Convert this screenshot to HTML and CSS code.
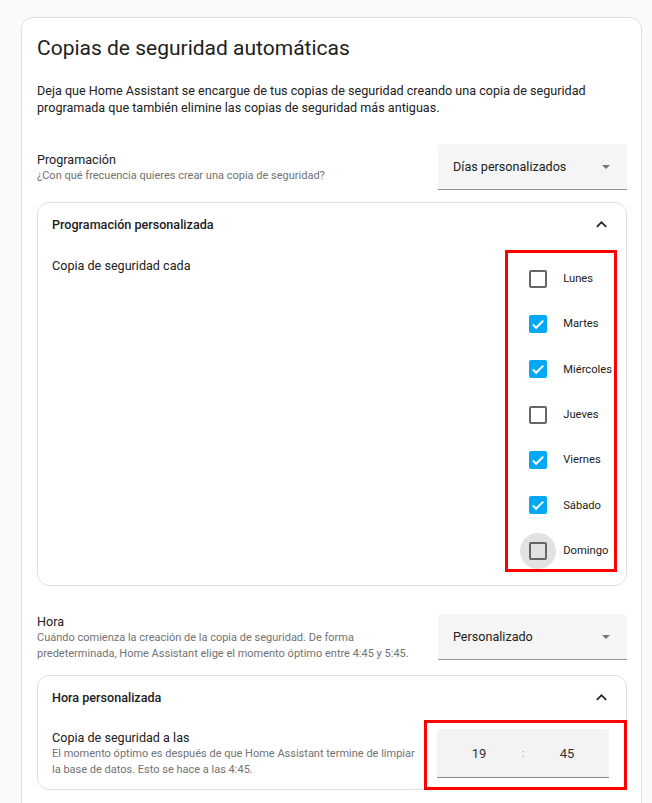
FILE: index.html
```html
<!DOCTYPE html>
<html lang="es">
<head>
    <meta charset="UTF-8">
    <meta name="viewport" content="width=device-width, initial-scale=1.0">
    <title>Copias de seguridad automáticas</title>
    <link rel="stylesheet" href="styles.css">
</head>
<body>

<div class="card">
    <h1 class="card-title">Copias de seguridad automáticas</h1>
    <p class="card-desc">Deja que Home Assistant se encargue de tus copias de seguridad creando una copia de seguridad programada que también elimine las copias de seguridad más antiguas.</p>

    <div class="setting-row">
        <div class="setting-text">
            <div class="setting-label">Programación</div>
            <div class="setting-hint">¿Con qué frecuencia quieres crear una copia de seguridad?</div>
        </div>
        <div class="select">
            <span>Días personalizados</span>
            <svg class="select-arrow" viewBox="0 0 10 5"><path d="M0 0L5 5L10 0Z"/></svg>
        </div>
    </div>

    <div class="panel">
        <div class="panel-header">
            <span>Programación personalizada</span>
            <svg class="chevron" viewBox="0 0 24 24"><path d="M7.41,15.41L12,10.83L16.59,15.41L18,14L12,8L6,14L7.41,15.41Z"/></svg>
        </div>
        <div class="panel-body">
            <div class="setting-label body-label">Copia de seguridad cada</div>
            <div class="days">
                <div class="day">
                    <span class="box-wrap"><span class="box"></span></span>
                    <span class="day-name">Lunes</span>
                </div>
                <div class="day">
                    <span class="box-wrap"><span class="box checked"><svg viewBox="0 0 24 24"><polyline points="5,12.5 9.5,17 19,7.5"/></svg></span></span>
                    <span class="day-name">Martes</span>
                </div>
                <div class="day">
                    <span class="box-wrap"><span class="box checked"><svg viewBox="0 0 24 24"><polyline points="5,12.5 9.5,17 19,7.5"/></svg></span></span>
                    <span class="day-name">Miércoles</span>
                </div>
                <div class="day">
                    <span class="box-wrap"><span class="box"></span></span>
                    <span class="day-name">Jueves</span>
                </div>
                <div class="day">
                    <span class="box-wrap"><span class="box checked"><svg viewBox="0 0 24 24"><polyline points="5,12.5 9.5,17 19,7.5"/></svg></span></span>
                    <span class="day-name">Viernes</span>
                </div>
                <div class="day">
                    <span class="box-wrap"><span class="box checked"><svg viewBox="0 0 24 24"><polyline points="5,12.5 9.5,17 19,7.5"/></svg></span></span>
                    <span class="day-name">Sábado</span>
                </div>
                <div class="day">
                    <span class="box-wrap hover"><span class="box"></span></span>
                    <span class="day-name">Domingo</span>
                </div>
                <!-- highlight frame -->
                <div class="mark mark-days"></div>
            </div>
        </div>
    </div>

    <div class="setting-row row-time">
        <div class="setting-text">
            <div class="setting-label">Hora</div>
            <div class="setting-hint">Cuándo comienza la creación de la copia de seguridad. De forma predeterminada, Home Assistant elige el momento óptimo entre 4:45 y 5:45.</div>
        </div>
        <div class="select">
            <span>Personalizado</span>
            <svg class="select-arrow" viewBox="0 0 10 5"><path d="M0 0L5 5L10 0Z"/></svg>
        </div>
    </div>

    <div class="panel panel-time">
        <div class="panel-header">
            <span>Hora personalizada</span>
            <svg class="chevron" viewBox="0 0 24 24"><path d="M7.41,15.41L12,10.83L16.59,15.41L18,14L12,8L6,14L7.41,15.41Z"/></svg>
        </div>
        <div class="panel-body body-center">
            <div class="setting-text">
                <div class="setting-label">Copia de seguridad a las</div>
                <div class="setting-hint">El momento óptimo es después de que Home Assistant termine de limpiar la base de datos. Esto se hace a las 4:45.</div>
            </div>
            <div class="time-wrap">
                <div class="time-input">
                    <span>19</span>
                    <span class="time-sep">:</span>
                    <span>45</span>
                </div>
                <div class="mark mark-time"></div>
            </div>
        </div>
    </div>
</div>

</body>
</html>
```

FILE: styles.css
```css
body {
    margin: 0;
    background-color: #fafafa;
    font-family: Roboto, "Liberation Sans", sans-serif;
    color: #212121;
}

.card {
    width: 621px;
    box-sizing: border-box;
    margin: 17px 0 0 21px;
    padding: 16px 14px 24px 15px;
    background-color: #fff;
    border: 1px solid #e0e0e0;
    border-radius: 12px;
}

.card-title {
    margin: 0;
    font-size: 21px;
    line-height: 28px;
    font-weight: 400;
}

.card-desc {
    margin: 20px 0 0;
    font-size: 12.6px;
    line-height: 17px;
}

.setting-row {
    display: flex;
    align-items: center;
    gap: 14px;
    margin-top: 28px;
}

.row-time {
    margin-top: 26.5px;
}

.setting-text {
    flex: 1;
}

.setting-label {
    font-size: 12.6px;
    line-height: 17px;
}

.setting-hint {
    font-size: 11px;
    line-height: 16px;
    color: #727272;
}

.select {
    width: 189px;
    height: 46px;
    box-sizing: border-box;
    display: flex;
    align-items: center;
    justify-content: space-between;
    padding: 0 17px 0 15px;
    background-color: #f5f5f5;
    border-bottom: 1px solid #949494;
    border-radius: 4px 4px 0 0;
    font-size: 12.6px;
}

.select-arrow {
    width: 8px;
    height: 4px;
    fill: #757575;
}

.panel {
    margin-top: 12px;
    border: 1px solid #e0e0e0;
    border-radius: 12px;
}

.panel-time {
    margin-top: 13.5px;
}

.panel-header {
    height: 42px;
    display: flex;
    align-items: center;
    justify-content: space-between;
    padding: 0 14px 0 14px;
    font-size: 12.6px;
    font-weight: 500;
}

.chevron {
    width: 21px;
    height: 21px;
    fill: #212121;
}

.panel-body {
    display: flex;
    justify-content: space-between;
    align-items: flex-start;
    padding: 11px 14px 12px;
}

.body-label {
    margin-top: 1px;
}

.body-center {
    align-items: center;
    gap: 14px;
    padding-bottom: 11px;
}

.days {
    position: relative;
    display: flex;
    flex-direction: column;
}

.day {
    height: 45.33px;
    display: flex;
    align-items: center;
}

.box-wrap {
    width: 36px;
    height: 36px;
    display: flex;
    align-items: center;
    justify-content: center;
    border-radius: 50%;
}

.box-wrap.hover {
    background-color: #e2e2e2;
}

.box {
    width: 18px;
    height: 18px;
    box-sizing: border-box;
    border: 2px solid #666;
    border-radius: 2px;
}

.box.checked {
    border: none;
    background-color: #03a9f4;
}

.box svg {
    display: block;
    width: 18px;
    height: 18px;
    fill: none;
    stroke: #fff;
    stroke-width: 2.6;
}

.day-name {
    margin-left: 7px;
    font-size: 11.2px;
}

.mark {
    position: absolute;
    border: 3px solid #ff0000;
    pointer-events: none;
}

.mark-days {
    left: -15px;
    right: -5px;
    top: -6.3px;
    bottom: 1.3px;
}

.time-wrap {
    position: relative;
    margin-right: 3px;
}

.time-input {
    width: 172px;
    height: 49px;
    box-sizing: border-box;
    display: grid;
    grid-template-columns: 1fr 10px 1fr;
    align-items: center;
    text-align: center;
    padding: 0 3px;
    background-color: #f3f3f3;
    border-bottom: 1px solid #8c8c8c;
    border-radius: 4px 4px 0 0;
    font-size: 13px;
    color: #333;
}

.time-sep {
    color: #9e9e9e;
    font-size: 11px;
}

.mark-time {
    left: -13px;
    right: -18px;
    top: -9px;
    bottom: -12px;
}
```
